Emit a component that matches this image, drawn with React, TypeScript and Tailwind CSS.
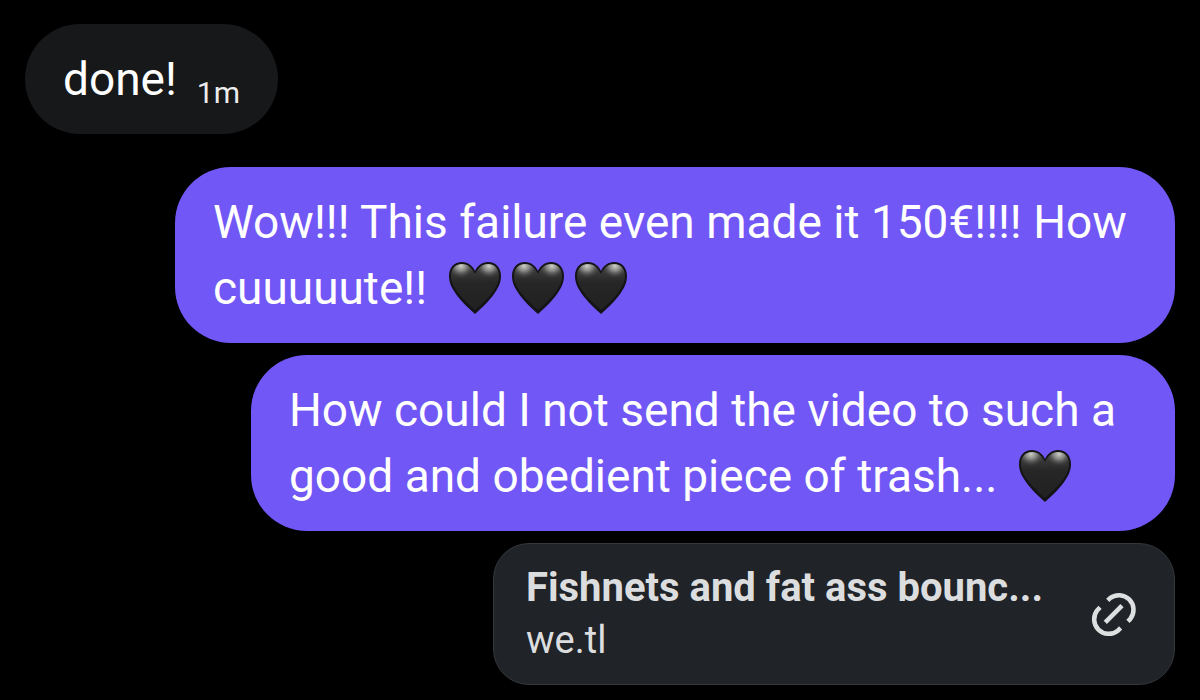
import React, { ReactNode } from 'react'


const Heart = () => (
    <svg viewBox="0 0 52 52" className="w-[52px] h-[52px] shrink-0" role="img" aria-label="black heart">
        <defs>
            <linearGradient id="heart-body" x1="0" y1="0" x2="0" y2="1">
                <stop offset="0" stopColor="#484848" />
                <stop offset="0.4" stopColor="#262626" />
                <stop offset="1" stopColor="#202020" />
            </linearGradient>
            <radialGradient id="heart-shine">
                <stop offset="0" stopColor="#d0d0c6" />
                <stop offset="0.4" stopColor="#929290" stopOpacity="0.85" />
                <stop offset="1" stopColor="#303030" stopOpacity="0" />
            </radialGradient>
            <clipPath id="heart-inner">
                <path d="M26 48C19 42 11 34 7 28C3 22 2 18 2 14C2 7 6 2 13 2C19 2 23 6 26 12C29 6 33 2 39 2C46 2 50 7 50 14C50 18 49 22 45 28C41 34 33 42 26 48Z" />
            </clipPath>
        </defs>
        <path d="M26 52C19 46 9 36 5 29C1 23 0 18 0 14C0 6 5 0 13 0C19 0 24 4 26 9C28 4 33 0 39 0C47 0 52 6 52 14C52 18 51 23 47 29C43 36 33 46 26 52Z" fill="#141416" />
        <g clipPath="url(#heart-inner)">
            <rect width="52" height="52" fill="url(#heart-body)" />
            <ellipse cx="12" cy="4" rx="14" ry="13" fill="url(#heart-shine)" />
            <ellipse cx="40" cy="4" rx="14" ry="13" fill="url(#heart-shine)" />
        </g>
    </svg>
)

const LinkIcon = () => (
    <svg viewBox="98 179 138 138" className="w-12 h-12 shrink-0" fill="none" stroke="#dedfe0" strokeWidth="13" aria-hidden="true">
        <path d="M149 209L155 203A42 42 0 0 1 214 262L207 269" />
        <path d="M127 229L119 237A42 42 0 0 0 178 296L186 288" />
        <path d="M142 272L190 224" />
    </svg>
)

const SentMessage = ({ className, children }: { className: string, children: ReactNode }) => (
    <div className={`max-w-full rounded-[56px] bg-[#7157f5] px-[38px] py-[22px] text-[46px] leading-[66px] text-white ${className}`}>
        {children}
    </div>
)


const App = () => {

    return (
        <main className="flex min-h-screen flex-col bg-black px-[25px] pt-6 pb-4 font-['Roboto',sans-serif]">
            <div className="flex w-fit items-center gap-5 rounded-[56px] bg-[#16181a] px-[38px] py-[22px] text-white">
                <span className="text-[46px] leading-[66px]">done!</span>
                <time className="pt-7 text-[30px] leading-9 text-[#ececec]">1m</time>
            </div>
            <div className="mt-[33px] flex flex-col items-end gap-3">
                <SentMessage className="w-[1000px]">
                    <p>Wow!!! This failure even made it 150€!!!! How</p>
                    <p className="flex items-center gap-[22px]">
                        <span>cuuuuute!!</span>
                        <span className="flex gap-[11px]">
                            <Heart />
                            <Heart />
                            <Heart />
                        </span>
                    </p>
                </SentMessage>
                <SentMessage className="w-[924px]">
                    <p>How could I not send the video to such a</p>
                    <p className="flex items-center gap-[22px]">
                        <span>good and obedient piece of trash...</span>
                        <Heart />
                    </p>
                </SentMessage>
                <a href="#" className="flex w-[682px] max-w-full items-center justify-between rounded-[36px] border border-[#34373b] bg-[#202327] py-[18px] pr-9 pl-8 text-[#dcdddf]">
                    <span className="flex min-w-0 flex-col">
                        <span className="text-[40px] leading-[52px] font-bold">Fishnets and fat ass bounc...</span>
                        <span className="text-[38px] leading-[52px]">we.tl</span>
                    </span>
                    <LinkIcon />
                </a>
            </div>
        </main>
    )
}

export default App
